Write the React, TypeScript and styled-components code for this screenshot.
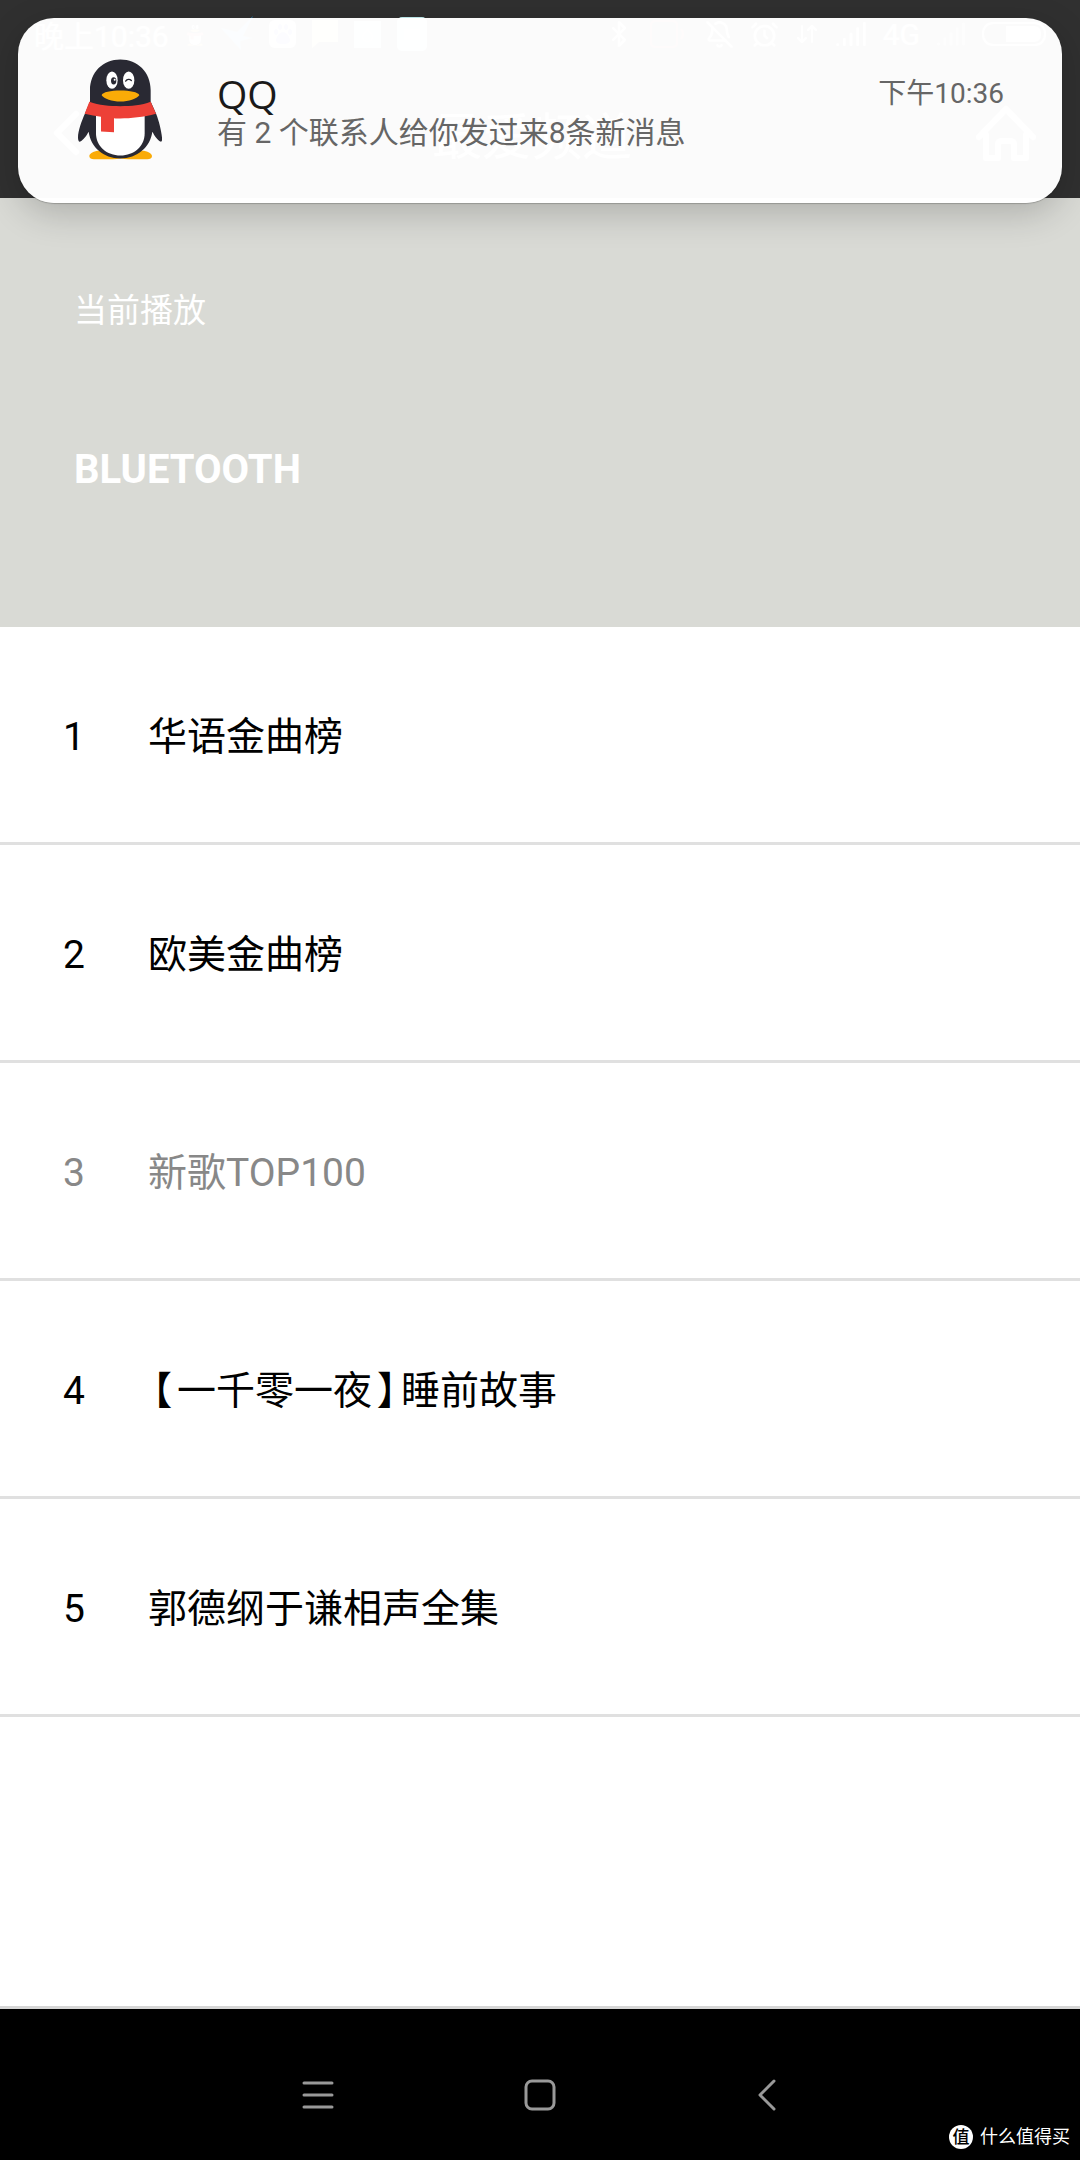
import React from "react";
import styled, { createGlobalStyle } from "styled-components";
import { AlarmClock, ArrowDownUp, BellOff, Bluetooth, Droplet, Signal } from "lucide-react";

const GlobalStyle = createGlobalStyle`
    * {
        box-sizing: border-box;
    }
    body {
        margin: 0;
        background: #fff;
        font-family: Roboto, "Noto Sans CJK SC", sans-serif;
    }
    button {
        padding: 0;
        border: none;
        background: none;
        color: inherit;
        font: inherit;
        cursor: pointer;
    }
    svg {
        display: block;
        flex: none;
    }
`;

const Page = styled.div`
    position: relative;
    display: flex;
    flex-direction: column;
    min-height: 100vh;
`;

const Header = styled.header`
    background: #303030;
    color: #fff;
`;

const StatusBar = styled.div`
    display: flex;
    align-items: center;
    justify-content: space-between;
    height: 68px;
    padding: 0 34px;
    font-size: 30px;
`;

const StatusGroup = styled.div`
    display: flex;
    align-items: center;
    gap: 16px;
`;

const AppBar = styled.div`
    display: flex;
    align-items: center;
    justify-content: space-between;
    height: 130px;
    padding: 0 44px;

    h1 {
        margin: 0;
        font-size: 50px;
        font-weight: 400;
    }
`;

const Notification = styled.section`
    position: absolute;
    top: 18px;
    left: 18px;
    right: 18px;
    display: flex;
    align-items: center;
    gap: 55px;
    min-height: 185px;
    padding: 0 58px 2px 60px;
    border-radius: 36px;
    background: rgba(255, 255, 255, 0.983);
    box-shadow: 0 1px 1px rgba(0, 0, 0, 0.2), 0 10px 36px rgba(0, 0, 0, 0.2);
`;

const NoticeBody = styled.div`
    flex: 1;

    h2 {
        margin: 0;
        color: #1a1a1a;
        font: 400 39px/46px "Open Sans", "Noto Sans", sans-serif;
    }
    p {
        margin: 0;
        color: #666;
        font-size: 30px;
        line-height: 32px;
    }
`;

const NoticeTop = styled.div`
    display: flex;
    align-items: center;
    justify-content: space-between;

    time {
        color: #666;
        font-size: 28px;
        line-height: 46px;
    }
`;

const NowPlaying = styled.section`
    display: flex;
    flex-direction: column;
    gap: 111px;
    height: 429px;
    padding: 89px 74px 0;
    background: #d9dad5;
    color: #fff;

    p {
        margin: 0;
        font-size: 33px;
        line-height: 48px;
    }
    strong {
        font-size: 40px;
        line-height: 48px;
    }
`;

const ChannelList = styled.ol`
    flex: 1;
    margin: 0;
    padding: 0;
    list-style: none;
`;

const Channel = styled.li<{ $dim?: boolean }>`
    border-bottom: 3px solid #e0e0e0;
    color: ${(p) => (p.$dim ? "#888" : "#000")};
    font-size: 39px;

    button {
        display: flex;
        align-items: baseline;
        width: 100%;
        height: 215px;
        padding: 86px 63px 0;
        line-height: 48px;
        text-align: left;
    }
`;

const Index = styled.span`
    width: 85px;
`;

// full-width brackets are set tighter than the other characters
const Bracket = styled.span`
    display: inline-block;
    width: 29px;
    text-align: center;
    font-feature-settings: "halt";
`;

const NavBar = styled.nav`
    position: relative;
    display: flex;
    justify-content: center;
    gap: 158px;
    height: 154px;
    padding-top: 54px;
    border-top: 3px solid #d6d6d6;
    background: #000;
    color: #999;

    button {
        display: flex;
        align-items: center;
        justify-content: center;
        width: 64px;
        height: 64px;
    }
`;

const Watermark = styled.div`
    position: absolute;
    right: 10px;
    bottom: 10px;
    display: flex;
    align-items: center;
    gap: 7px;
    color: #fff;
    font-size: 18px;
    line-height: 26px;
`;

const Badge = styled.span`
    display: flex;
    align-items: center;
    justify-content: center;
    width: 24px;
    height: 24px;
    border-radius: 50%;
    background: #fff;
    color: #000;
    font-size: 17px;
    font-weight: 500;
    line-height: 24px;
`;

const Penguin = ({ width, height }: { width: number; height: number }): React.JSX.Element => (
    <svg width={width} height={height} viewBox="54 27 252 302">
        <path d="M88 318c0-8 14-16 30-16h128c16 0 30 8 30 16 0 6-6 9-14 9-30 1-56 1-80-2-24 3-50 3-80 2-8 0-14-3-14-9z" fill="#faab07" />
        <path d="M181 28c-52 0-91 38-91 92v34L75 190c-10 22-21 52-21 72 0 10 3 14 7 12 8-3 18-16 25-29 6 46 44 80 95 80s90-34 96-80c7 13 16 26 24 29 4 2 6-2 5-12-2-20-9-50-18-72l-16-36v-34c0-54-39-92-91-92z" fill="#292933" />
        <path d="M108 190v60c0 38 32 66 73 66s73-28 73-66v-60z" fill="#fff" />
        <path d="M88 155c30 11 60 13 93 13s64-2 91-13l16 36c-38 10-76 14-107 14-7 0-12 0-19-1v42l-39-2v-44c-16-2-32-5-49-9z" fill="#ed4037" />
        <ellipse cx="156" cy="90" rx="17" ry="26" fill="#fff" />
        <ellipse cx="206" cy="90" rx="17" ry="26" fill="#fff" />
        <ellipse cx="161" cy="92" rx="8" ry="11" fill="#292933" />
        <circle cx="164" cy="89" r="3" fill="#fff" />
        <path d="M197 93c4-6 12-7 17-2" fill="none" stroke="#292933" strokeWidth="4" strokeLinecap="round" />
        <path d="M125 135c2-9 28-14 56-14s54 5 57 14c-8 11-32 19-57 19s-49-8-56-19z" fill="#faab07" />
    </svg>
);

const StatusIcons = (): React.JSX.Element => (
    <StatusBar>
        <StatusGroup>
            <span>晚上10:36</span>
            <Penguin width={20} height={26} />
            <svg width="32" height="36" viewBox="0 0 32 36">
                <path d="M0 12l16 4L32 0 22 20l9 2-12 3 1 9z" fill="#2b90d0" />
            </svg>
            <svg width="27" height="28" viewBox="0 0 27 28">
                <rect width="27" height="28" rx="6" fill="#fff" />
                <g fill="#3a5bd9">
                    <ellipse cx="7" cy="12" rx="2" ry="3" />
                    <ellipse cx="11" cy="7" rx="2" ry="3" />
                    <ellipse cx="17" cy="7" rx="2" ry="3" />
                    <ellipse cx="21" cy="12" rx="2" ry="3" />
                    <path d="M14 12c4 0 7 6 7 8 0 4-4 4-7 4s-7 0-7-4c0-2 3-8 7-8z" />
                </g>
            </svg>
            <svg width="26" height="28" viewBox="0 0 26 28">
                <path d="M0 0h26v22H7l-7 6z" fill="#ffe08a" />
            </svg>
            <svg width="27" height="27" viewBox="0 0 27 27">
                <rect width="27" height="27" fill="#9fe0f5" />
                <Droplet x="5" y="5" width="17" height="17" color="#fff" />
            </svg>
            <svg width="30" height="34" viewBox="0 0 30 34">
                <rect width="30" height="34" rx="5" fill="#c4f0f2" />
                <rect x="7" y="12" width="16" height="11" fill="#fff" />
            </svg>
        </StatusGroup>
        <StatusGroup>
            <Bluetooth size={28} />
            <svg width="40" height="30" viewBox="0 0 40 30">
                <rect x="2" y="2" width="26" height="26" rx="4" fill="none" stroke="#c33" strokeWidth="2" />
                <path d="M32 10q4 5 0 10" fill="none" stroke="#c33" strokeWidth="2" />
            </svg>
            <BellOff size={29} />
            <AlarmClock size={29} />
            <ArrowDownUp size={24} />
            <Signal size={32} />
            <span>4G</span>
            <Signal size={30} opacity={0.5} />
            <svg width="64" height="24" viewBox="0 0 64 24">
                <rect x="1" y="1" width="62" height="22" rx="10" fill="none" stroke="#fff" strokeWidth="2" />
                <path d="M24 4h28a7 7 0 0 1 7 7v2a7 7 0 0 1-7 7H24z" fill="#fff" />
            </svg>
        </StatusGroup>
    </StatusBar>
);

const channels = [
    { id: 1, name: "华语金曲榜" },
    { id: 2, name: "欧美金曲榜" },
    { id: 3, name: "新歌TOP100", dim: true },
    { id: 4, name: "【一千零一夜】睡前故事" },
    { id: 5, name: "郭德纲于谦相声全集" },
];

const renderName = (name: string) =>
    name.split(/([【】])/).map((part, i) => (/[【】]/.test(part) ? <Bracket key={i}>{part}</Bracket> : part));

const App = (): React.JSX.Element => {
    return (
        <Page>
            <GlobalStyle />
            <Header>
                <StatusIcons />
                <AppBar>
                    <button aria-label="返回">
                        <svg width="44" height="48" viewBox="0 0 44 48">
                            <path d="M32 5L13 24l19 19" fill="none" stroke="#fff" strokeWidth="6" strokeLinecap="round" strokeLinejoin="round" />
                        </svg>
                    </button>
                    <h1>最爱频道</h1>
                    <button aria-label="主页">
                        <svg width="60" height="56" viewBox="0 0 60 56">
                            <path
                                d="M3 32L30 4l27 28M10 30v23h12V40q0-4 4-4h8q4 0 4 4v13h12V30"
                                fill="none"
                                stroke="#fff"
                                strokeWidth="6"
                                strokeLinecap="round"
                                strokeLinejoin="round"
                            />
                        </svg>
                    </button>
                </AppBar>
            </Header>

            <NowPlaying>
                <p>当前播放</p>
                <strong>BLUETOOTH</strong>
            </NowPlaying>

            <ChannelList>
                {channels.map((c) => (
                    <Channel key={c.id} $dim={c.dim}>
                        <button>
                            <Index>{c.id}</Index>
                            <span>{renderName(c.name)}</span>
                        </button>
                    </Channel>
                ))}
            </ChannelList>

            <NavBar>
                <button aria-label="菜单">
                    <svg width="32" height="32" viewBox="0 0 32 32">
                        <path d="M2 4h28M2 16h28M2 28h28" stroke="currentColor" strokeWidth="3" strokeLinecap="round" />
                    </svg>
                </button>
                <button aria-label="桌面">
                    <svg width="32" height="32" viewBox="0 0 32 32">
                        <rect x="2" y="2" width="28" height="28" rx="6" fill="none" stroke="currentColor" strokeWidth="3" />
                    </svg>
                </button>
                <button aria-label="后退">
                    <svg width="32" height="32" viewBox="0 0 32 32">
                        <path d="M28 2L14 16l14 14" fill="none" stroke="currentColor" strokeWidth="3" strokeLinecap="round" strokeLinejoin="round" />
                    </svg>
                </button>
                <Watermark>
                    <Badge>值</Badge>
                    <span>什么值得买</span>
                </Watermark>
            </NavBar>

            <Notification>
                <Penguin width={84} height={101} />
                <NoticeBody>
                    <NoticeTop>
                        <h2>QQ</h2>
                        <time dateTime="22:36">下午10:36</time>
                    </NoticeTop>
                    <p>有 2 个联系人给你发过来8条新消息</p>
                </NoticeBody>
            </Notification>
        </Page>
    );
};

export default App;
